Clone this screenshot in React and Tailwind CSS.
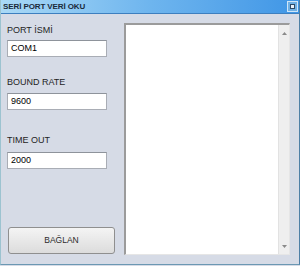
export default function App() {
  const font = { fontFamily: '"Liberation Sans", Arial, sans-serif' };
  const Field = ({ label, value, mt, gap }) => (
    <div className={mt}>
      <div className="text-[9px] leading-[10px] text-[#1e1e1e] h-[10px]">{label}</div>
      <div className={`${gap} w-[100px] h-[17px] bg-white border border-[#a9adb5] border-t-[#8e939b] flex items-center pl-[3px] text-[9px] text-black`}>
        {value}
      </div>
    </div>
  );
  return (
    <div className="w-[300px] h-[266px] bg-[#d6dbe6] relative" style={font}>
      <div className="w-[300px] h-[265px] flex flex-col border-l border-r border-b border-l-[#9cc3d0] border-r-[#4d7fa6] border-b-[#6b98b3]">
        <div className="h-[14px] shrink-0 bg-gradient-to-r from-[#a9d9f6] via-[#6eb5ee] to-[#3f96e6] border-b border-[#3d7fbf] flex items-center justify-between pl-[2px] pr-[1px]">
          <span className="text-[8px] font-bold text-[#1a2a3a] tracking-[-0.1px]">SERİ PORT VERİ OKU</span>
          <div className="w-[11px] h-[11px] border border-[#cfe6f8] bg-[#6fb0e4] flex items-center justify-center">
            <div className="w-[5px] h-[5px] bg-[#e8f2fb] border border-[#2d4a66]" />
          </div>
        </div>
        <div className="flex flex-1 min-h-0">
          <div className="w-[123px] shrink-0 flex flex-col pl-[6px] pt-[11px] pb-[10px]">
            <Field label="PORT İSMİ" value="COM1" mt="" gap="mt-[5px]" />
            <Field label="BOUND RATE" value="9600" mt="mt-[20px]" gap="mt-[6px]" />
            <Field label="TIME OUT" value="2000" mt="mt-[25px]" gap="mt-[7px]" />
            <div className="flex-1" />
            <button className="w-[107px] h-[27px] rounded-[3px] border border-[#8f8f8f] bg-gradient-to-b from-[#f4f4f4] to-[#dcdcdc] text-[8.5px] text-[#2b2b2b] ml-[1px]">
              BAĞLAN
            </button>
          </div>
          <div className="flex-1 pt-[9px] pr-[9px]">
            <div className="h-[232px] flex bg-white border-t-2 border-l-2 border-r border-b border-t-[#9b9b9b] border-l-[#9b9b9b] border-r-[#e6e6e6] border-b-[#e6e6e6]">
              <div className="flex-1" />
              <div className="w-[11px] bg-[#efefef] border-l border-[#e2e2e2] flex flex-col items-center justify-between pt-[7px] pb-[6px]">
                <svg width="5" height="3" viewBox="0 0 5 3"><path d="M2.5 0 L5 3 L0 3 Z" fill="#8a8a8a" /></svg>
                <svg width="5" height="3" viewBox="0 0 5 3"><path d="M0 0 L5 0 L2.5 3 Z" fill="#8a8a8a" /></svg>
              </div>
            </div>
          </div>
        </div>
      </div>
    </div>
  );
}
